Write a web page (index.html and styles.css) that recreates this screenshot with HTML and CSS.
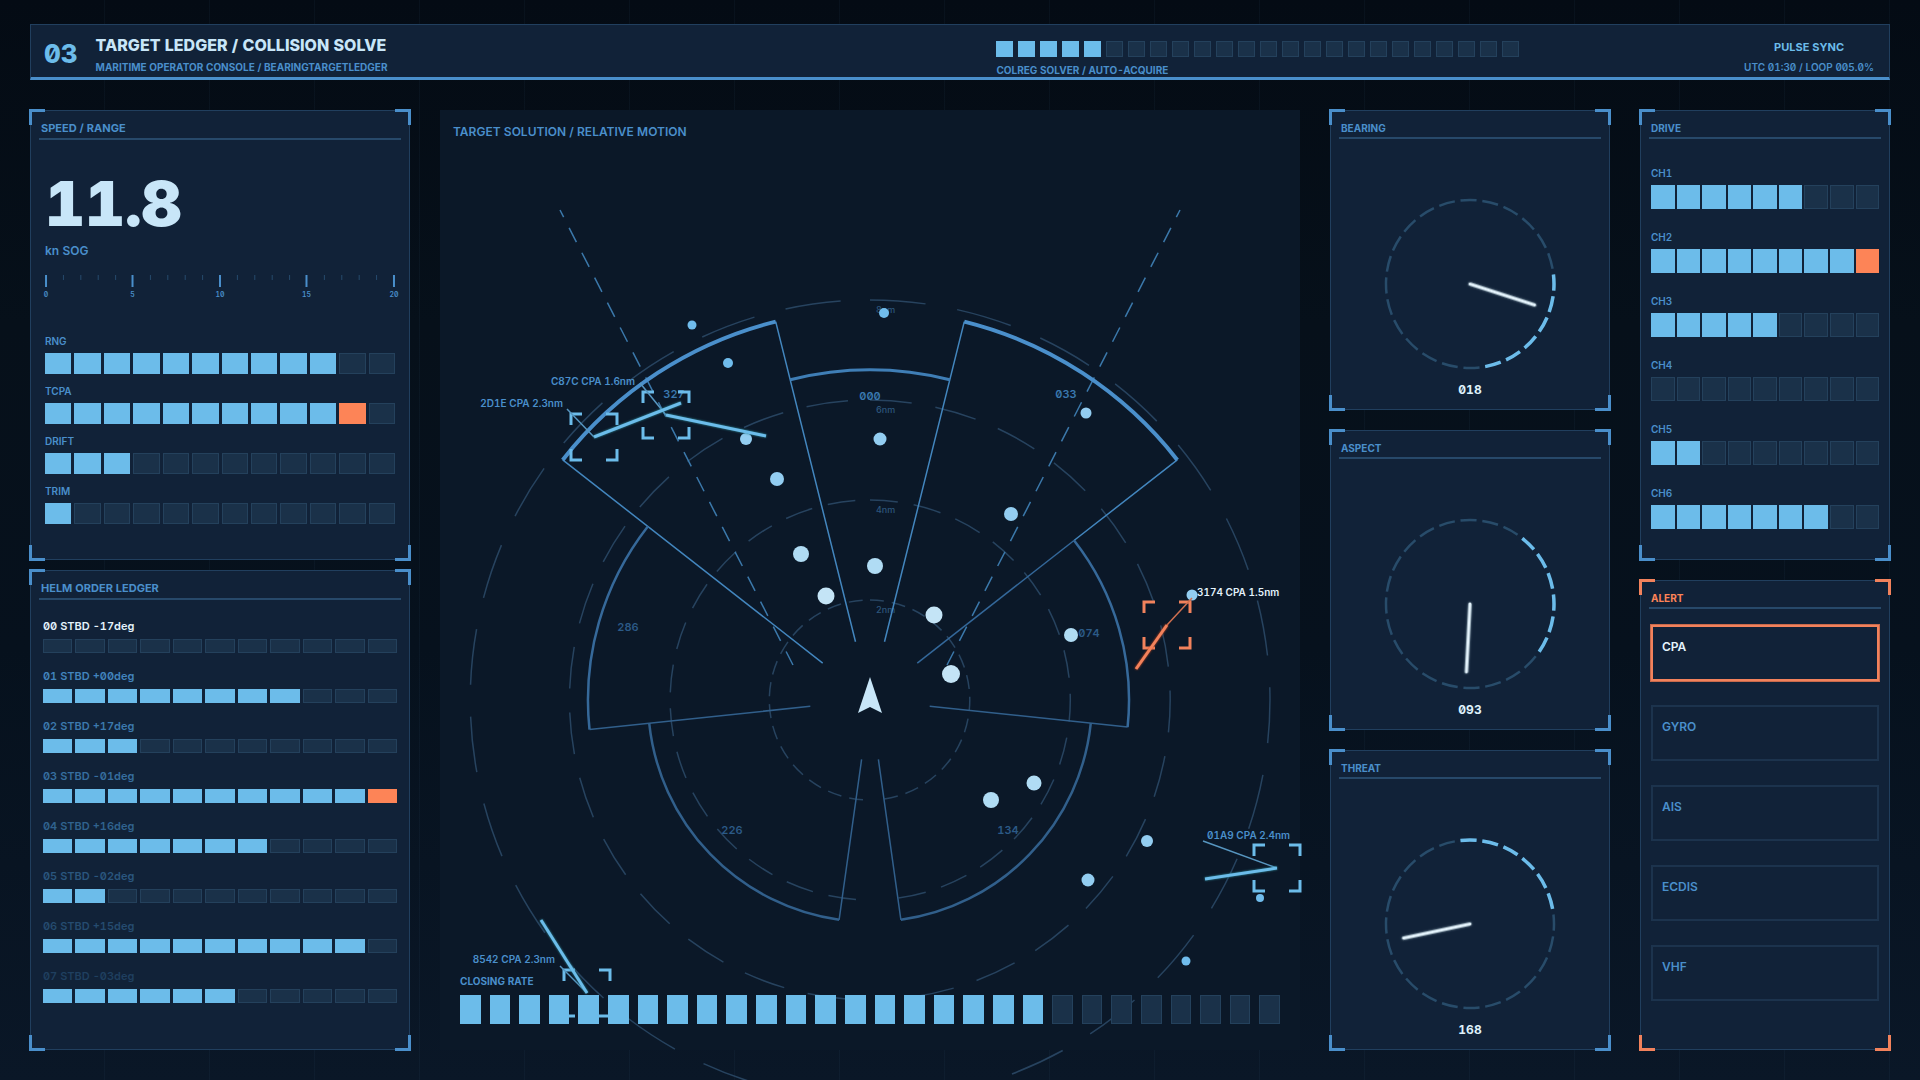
FILE: index.html
```html
<!DOCTYPE html>
<html lang="en">
<head>
<meta charset="utf-8">
<meta name="viewport" content="width=device-width, initial-scale=1">
<title>Target Ledger / Collision Solve</title>
<link rel="stylesheet" href="styles.css">
</head>
<body>
<div class="console">
  <header class="topbar">
    <div class="ident">
      <span class="ident-no">03</span>
      <div>
        <h1 class="ident-title">TARGET LEDGER / COLLISION SOLVE</h1>
        <p class="ident-sub">MARITIME OPERATOR CONSOLE / BEARINGTARGETLEDGER</p>
      </div>
    </div>
    <div class="solver">
      <div class="bar bar-solver" data-cells="24" data-lit="5"></div>
      <p class="small">COLREG SOLVER / AUTO-ACQUIRE</p>
    </div>
    <div class="sync">
      <p class="sync-title">PULSE SYNC</p>
      <p class="sync-clock">UTC 01:30 / LOOP 005.0%</p>
    </div>
  </header>

  <main class="deck">
    <div class="column column-left">
      <section class="panel">
        <h2 class="panel-title panel-title-lg">SPEED / RANGE</h2>
        <div class="speed">
          <p class="speed-value">11.8</p>
          <p class="speed-unit">kn SOG</p>
          <svg class="ruler" viewBox="0 0 352 24" aria-hidden="true">
            <path class="tick-minor" d="M18.5 0v5M36 0v5M53.5 0v5M71 0v5M106 0v5M123.5 0v5M141 0v5M158.5 0v5M193.5 0v5M211 0v5M228.500 0v5M246 0v5M281 0v5M298.500 0v5M316 0v5M333.500 0v5"/>
            <path class="tick-major" d="M1 0v12M88 0v12M176 0v12M263 0v12M351 0v12"/>
            <g class="tick-label"><text x="1" y="22">0</text><text x="88" y="22">5</text><text x="176" y="22">10</text><text x="263" y="22">15</text><text x="351" y="22">20</text></g>
          </svg>
          <div class="meters">
            <div class="meter"><span>RNG</span><div class="bar" data-cells="12" data-lit="10"></div></div>
            <div class="meter"><span>TCPA</span><div class="bar" data-cells="12" data-lit="10" data-hot="1"></div></div>
            <div class="meter"><span>DRIFT</span><div class="bar" data-cells="12" data-lit="3"></div></div>
            <div class="meter"><span>TRIM</span><div class="bar" data-cells="12" data-lit="1"></div></div>
          </div>
        </div>
      </section>
      <section class="panel">
        <h2 class="panel-title panel-title-lg">HELM ORDER LEDGER</h2>
        <ol class="ledger">
          <li class="age-0"><span>00 STBD -17deg</span><div class="bar" data-cells="11" data-lit="0"></div></li>
          <li class="age-1"><span>01 STBD +00deg</span><div class="bar" data-cells="11" data-lit="8"></div></li>
          <li class="age-2"><span>02 STBD +17deg</span><div class="bar" data-cells="11" data-lit="3"></div></li>
          <li class="age-3"><span>03 STBD -01deg</span><div class="bar" data-cells="11" data-lit="10" data-hot="1"></div></li>
          <li class="age-4"><span>04 STBD +16deg</span><div class="bar" data-cells="11" data-lit="7"></div></li>
          <li class="age-5"><span>05 STBD -02deg</span><div class="bar" data-cells="11" data-lit="2"></div></li>
          <li class="age-6"><span>06 STBD +15deg</span><div class="bar" data-cells="11" data-lit="10"></div></li>
          <li class="age-7"><span>07 STBD -03deg</span><div class="bar" data-cells="11" data-lit="6"></div></li>
        </ol>
      </section>
    </div>

    <section class="scope">
      <svg class="plot" viewBox="-430 -590 860 940" role="img" aria-label="Relative motion plot">
        <defs>
          <path id="lock" d="M-23 -12V-23H-12M12 -23H23V-12M23 12V23H12M-12 23H-23V12"/>
        </defs>
        <g class="rings">
          <path pathLength="172" d="M0 -100A100 100 0 0 1 13.900 99"/><path pathLength="172" d="M-7 99.800A100 100 0 0 1 -7 -99.800"/>
          <path pathLength="172" d="M0 -200A200 200 0 0 1 27.800 198.100"/><path pathLength="172" d="M-14 199.500A200 200 0 0 1 -14 -199.500"/>
          <path pathLength="172" d="M0 -300A300 300 0 0 1 41.800 297.100"/><path pathLength="172" d="M-21 299.300A300 300 0 0 1 -21 -299.300"/>
          <path pathLength="172" d="M0 -400A400 400 0 0 1 55.700 396.100"/><path pathLength="172" d="M-28 399A400 400 0 0 1 -28 -399"/>
        </g>
        <g class="ring-label"><text x="6" y="-387">8nm</text><text x="6" y="-287">6nm</text><text x="6" y="-187">4nm</text><text x="6" y="-87">2nm</text></g>
        <path class="limit" d="M-310 -490L-77 -35M310 -490L77 -35"/>
        <g class="sector">
          <path class="ray-3" d="M59.700 6.300L257.600 27.100M-59.700 6.300L-280.500 29.500M8.400 59.400L30.900 219.800M-8.400 59.400L-30.900 219.800"/>
          <path class="ray-1" d="M14.500 -58.200L94.300 -378.400M-14.500 -58.200L-94.300 -378.400M-47.300 -36.900L-307.300 -240.100M204 -159.500L307.300 -240.100"/>
          <path class="ray-2" d="M47.300 -36.900L204 -159.500"/>
          <path class="arc-1" d="M94.300 -378.400A390 390 0 0 1 307.300 -240.100M-307.300 -240.100A390 390 0 0 1 -94.300 -378.400"/>
          <path class="arc-2" d="M-79.800 -320.200A330 330 0 0 1 79.800 -320.200"/>
          <path class="arc-3" d="M-280.500 29.500A282 282 0 0 1 -222.200 -173.600M204.100 -159.500A259 259 0 0 1 257.600 27.100"/>
          <path class="arc-4" d="M220.800 23.200A222 222 0 0 1 30.900 219.800M-30.900 219.800A222 222 0 0 1 -220.800 23.200"/>
        </g>
        <g class="sector-label">
          <text class="near" x="0" y="-300">000</text><text class="near" x="196" y="-302">033</text><text class="near" x="-196" y="-302">327</text>
          <text x="219" y="-63">074</text><text x="-242" y="-69">286</text><text x="138" y="134">134</text><text x="-138" y="134">226</text>
        </g>
        <g class="echo-near">
          <circle cx="-44" cy="-104" r="8.500"/><circle cx="64" cy="-85" r="8.500"/><circle cx="81" cy="-26" r="9"/>
        </g>
        <g class="echo-mid">
          <circle cx="-69" cy="-146" r="8"/><circle cx="5" cy="-134" r="8"/><circle cx="121" cy="100" r="8"/><circle cx="164" cy="83" r="7.500"/><circle cx="201" cy="-65" r="7"/>
        </g>
        <g class="echo-far">
          <circle cx="-93" cy="-221" r="7"/><circle cx="141" cy="-186" r="7"/><circle cx="10" cy="-261" r="6.500"/><circle cx="-124" cy="-261" r="6"/><circle cx="218" cy="180" r="6.500"/><circle cx="277" cy="141" r="6"/><circle cx="216" cy="-287" r="5.500"/><circle cx="322" cy="-105" r="5.500"/>
        </g>
        <g class="echo-edge">
          <circle cx="-142" cy="-337" r="5"/><circle cx="14" cy="-387" r="5"/><circle cx="-178" cy="-375" r="4.500"/><circle cx="390" cy="198" r="4"/><circle cx="316" cy="261" r="4.500"/>
        </g>
        <g class="target">
          <use href="#lock" x="-204" y="-285"/><path class="leader" d="M-204 -285L-230 -317"/><path class="track" d="M-204 -285L-104 -264"/><text class="end" x="-235" y="-315">C87C CPA 1.6nm</text>
        </g>
        <g class="target">
          <use href="#lock" x="-276" y="-263"/><path class="leader" d="M-276 -263L-303 -291"/><path class="track" d="M-276 -263L-189 -297"/><text class="end" x="-307" y="-293">2D1E CPA 2.3nm</text>
        </g>
        <g class="target">
          <use href="#lock" x="407" y="168"/><path class="leader" d="M407 168L333 141"/><path class="track" d="M407 168L335 179"/><text x="337" y="139">01A9 CPA 2.4nm</text>
        </g>
        <g class="target">
          <use href="#lock" x="-283" y="293"/><path class="leader" d="M-283 293L-310 266"/><path class="track" d="M-283 293L-329 220"/><text class="end" x="-315" y="263">8542 CPA 2.3nm</text>
        </g>
        <g class="target target-hot">
          <use href="#lock" x="297" y="-75"/><path class="leader" d="M297 -75L322 -102"/><path class="track" d="M297 -75L266 -31"/><text x="327" y="-104">3174 CPA 1.5nm</text>
        </g>
        <path class="own-ship" d="M0 -23L12 13L0 7L-12 13Z"/>
      </svg>
      <div class="scope-overlay">
        <h2 class="scope-title">TARGET SOLUTION / RELATIVE MOTION</h2>
        <div class="closing">
          <span class="small">CLOSING RATE</span>
          <div class="bar" data-cells="28" data-lit="20"></div>
        </div>
      </div>
    </section>

    <div class="column column-dials">
      <section class="panel">
        <h2 class="panel-title">BEARING</h2>
        <svg class="dial" viewBox="-100 -100 200 200" aria-hidden="true">
          <circle class="dial-base" r="84" pathLength="360" transform="rotate(-96.500)"/>
          <circle class="dial-arc" r="84" pathLength="360" transform="rotate(-6.500)"/>
          <path class="needle" d="M0 0H68" transform="rotate(18)"/>
        </svg>
        <p class="dial-value">018</p>
      </section>
      <section class="panel">
        <h2 class="panel-title">ASPECT</h2>
        <svg class="dial" viewBox="-100 -100 200 200" aria-hidden="true">
          <circle class="dial-base" r="84" pathLength="360" transform="rotate(-96.500)"/>
          <circle class="dial-arc" r="84" pathLength="360" transform="rotate(-51.500)"/>
          <path class="needle" d="M0 0H68" transform="rotate(93)"/>
        </svg>
        <p class="dial-value">093</p>
      </section>
      <section class="panel">
        <h2 class="panel-title">THREAT</h2>
        <svg class="dial" viewBox="-100 -100 200 200" aria-hidden="true">
          <circle class="dial-base" r="84" pathLength="360" transform="rotate(-96.500)"/>
          <circle class="dial-arc" r="84" pathLength="360" transform="rotate(-96.500)"/>
          <path class="needle" d="M0 0H68" transform="rotate(168)"/>
        </svg>
        <p class="dial-value">168</p>
      </section>
    </div>

    <div class="column column-right">
      <section class="panel">
        <h2 class="panel-title">DRIVE</h2>
        <div class="channels">
          <div class="meter"><span>CH1</span><div class="bar" data-cells="9" data-lit="6"></div></div>
          <div class="meter"><span>CH2</span><div class="bar" data-cells="9" data-lit="8" data-hot="1"></div></div>
          <div class="meter"><span>CH3</span><div class="bar" data-cells="9" data-lit="5"></div></div>
          <div class="meter"><span>CH4</span><div class="bar" data-cells="9" data-lit="0"></div></div>
          <div class="meter"><span>CH5</span><div class="bar" data-cells="9" data-lit="2"></div></div>
          <div class="meter"><span>CH6</span><div class="bar" data-cells="9" data-lit="7"></div></div>
        </div>
      </section>
      <section class="panel panel-alert">
        <h2 class="panel-title">ALERT</h2>
        <ul class="alerts">
          <li class="active">CPA</li>
          <li>GYRO</li>
          <li>AIS</li>
          <li>ECDIS</li>
          <li>VHF</li>
        </ul>
      </section>
    </div>
  </main>
</div>
<script src="bars.js"></script>
</body>
</html>
```
FILE: styles.css
```css
:root {
  --cyan: #6cbcea;
  --blue: #4a8fcb;
  --ice: #c8e6f8;
  --hot: #fd8457;
  --panel: #112238;
  --line: #213f5e;
  --cell: #1a3149;
  --cell-line: #24415c;
}

* { box-sizing: border-box; }

body, h1, h2, p, ol, ul { margin: 0; padding: 0; }
ol, ul { list-style: none; }

body {
  font-family: Inter, "Noto Sans", sans-serif;
  font-weight: 600;
  font-feature-settings: "zero", "tnum";
  color: var(--blue);
  background: #07111c;
}

.console {
  display: flex;
  flex-direction: column;
  gap: 30px;
  min-height: 100vh;
  padding: 24px 30px 30px;
  overflow: hidden;
  background:
    repeating-linear-gradient(90deg, transparent 0 104px, rgba(80, 130, 170, 0.06) 104px 105px),
    linear-gradient(#040b14, #06101a 30%, #06111d 60%, #0a1727);
}

.small { font-size: 10px; line-height: 14px; font-weight: 700; }

/* Top bar */
.topbar {
  display: grid;
  grid-template-columns: 967fr 523fr 371fr;
  height: 56px;
  background: var(--panel);
  border: 1px solid var(--line);
  border-bottom: 3px solid var(--blue);
}
.ident { display: flex; align-items: center; gap: 18px; padding-left: 13px; padding-top: 6px; }
.ident-no { font-size: 26px; line-height: 32px; font-weight: 800; color: var(--cyan); }
.ident-title { font-size: 16px; line-height: 20px; font-weight: 800; color: var(--ice); }
.ident-sub { margin-top: 5px; font-size: 10px; line-height: 14px; font-weight: 700; }
.solver { display: grid; align-content: start; gap: 6px; padding-top: 16px; }
.sync { justify-self: end; padding: 14px 15px 0 0; text-align: center; }
.sync-title { margin-bottom: 5px; font-size: 11px; line-height: 16px; font-weight: 700; color: var(--cyan); }
.sync-clock { font-size: 10px; line-height: 14px; }

/* Segmented bars */
.bar { display: flex; gap: 3px; height: 21px; }
.cell { flex: 1 1 0; background: var(--cell); border: 1px solid var(--cell-line); }
.cell.lit { background: var(--cyan); border-color: var(--cyan); }
.cell.hot { background: var(--hot); border-color: var(--hot); }
.bar-solver { gap: 5px; height: 16px; }

/* Deck and panels */
.deck {
  flex: 1;
  display: grid;
  grid-template-columns: 380fr 860fr 280fr 250fr;
  gap: 30px;
}
.column { display: grid; gap: 20px; }
.column-left { grid-template-rows: 450fr 480fr; gap: 10px; }
.column-dials { grid-template-rows: repeat(3, 1fr); }
.column-right { grid-template-rows: 450fr 470fr; }

.panel {
  --corner: var(--blue);
  position: relative;
  display: flex;
  flex-direction: column;
  padding: 9px 8px;
  background: var(--panel);
  border: 1px solid var(--line);
}
.panel::after {
  content: "";
  position: absolute;
  inset: -2px;
  pointer-events: none;
  background:
    linear-gradient(var(--corner) 0 0) 0 0 / 16px 3px,
    linear-gradient(var(--corner) 0 0) 0 0 / 3px 16px,
    linear-gradient(var(--corner) 0 0) 100% 0 / 16px 3px,
    linear-gradient(var(--corner) 0 0) 100% 0 / 3px 16px,
    linear-gradient(var(--corner) 0 0) 0 100% / 16px 3px,
    linear-gradient(var(--corner) 0 0) 0 100% / 3px 16px,
    linear-gradient(var(--corner) 0 0) 100% 100% / 16px 3px,
    linear-gradient(var(--corner) 0 0) 100% 100% / 3px 16px;
  background-repeat: no-repeat;
}
.panel-alert { --corner: #f2825c; }
.panel-title {
  padding: 0 2px 1px;
  border-bottom: 2px solid #27496a;
  font-size: 10px;
  line-height: 16px;
  font-weight: 700;
}
.panel-title-lg { padding-bottom: 2px; font-size: 11px; }
.panel-alert .panel-title { color: var(--hot); }

/* Speed */
.speed { padding: 32px 6px 0; }
.speed-value { font-size: 62px; line-height: 64px; font-weight: 900; color: var(--ice); }
.speed-unit { margin-top: 7px; font-size: 12px; line-height: 16px; }
.ruler { display: block; width: 100%; margin-top: 16px; overflow: visible; }
.tick-major { stroke: var(--blue); stroke-width: 2; }
.tick-minor { stroke: #264b6d; stroke-width: 1; }
.tick-label { fill: var(--blue); font-size: 7px; text-anchor: middle; }
.meters { display: grid; gap: 10px; margin-top: 35px; }
.meter { display: grid; gap: 5px; font-size: 10px; line-height: 14px; }

/* Ledger */
.ledger { display: grid; gap: 15px; padding: 18px 4px 0; font-size: 11px; line-height: 16px; }
.ledger li { display: grid; gap: 5px; }
.ledger .bar { height: 14px; }
.age-0 { color: #e4f3fc; }
.age-1 { color: #4284bd; }
.age-2 { color: #3c79ad; }
.age-3 { color: #366e9f; }
.age-4 { color: #30628e; }
.age-5 { color: #2a567e; }
.age-6 { color: #254b6f; }
.age-7 { color: #1f3f5f; }

/* Scope */
.scope { display: grid; background: #0b1828; }
.plot, .scope-overlay { grid-area: 1 / 1; }
.plot { display: block; width: 100%; height: 100%; overflow: visible; fill: none; }
.scope-overlay {
  display: flex;
  flex-direction: column;
  justify-content: space-between;
  padding: 14px 20px 26px 13px;
}
.scope-title { font-size: 12px; line-height: 16px; font-weight: 600; }
.closing { display: grid; gap: 7px; padding-left: 7px; }
.closing .bar { gap: 9px; height: 29px; }

.plot text { font-size: 10px; stroke: none; }
.rings { stroke: #27435f; stroke-width: 1.5; stroke-dasharray: 8 4.6; }
.plot .ring-label text { font-size: 9px; font-weight: 500; fill: #2d567c; }
.limit { stroke: #3b78aa; stroke-width: 1.5; stroke-dasharray: 16 12; stroke-dashoffset: 8; }
.ray-1 { stroke: #4386be; stroke-width: 1.5; }
.ray-2 { stroke: #34689a; stroke-width: 1.5; }
.ray-3 { stroke: #315f8b; stroke-width: 1.5; }
.arc-1 { stroke: var(--blue); stroke-width: 4; }
.arc-2 { stroke: #3f7eb6; stroke-width: 3; }
.arc-3 { stroke: #36699a; stroke-width: 2.5; }
.arc-4 { stroke: #315f8b; stroke-width: 2.5; }
.plot .sector-label text { font-size: 11px; text-anchor: middle; fill: #2b5a87; }
.plot .sector-label .near { fill: #3a78af; }
.echo-near { fill: #c4e4f6; }
.echo-mid { fill: #b0dcf4; }
.echo-far { fill: #93cdf1; }
.echo-edge { fill: #70bcec; }
.own-ship { fill: var(--ice); }
.target { stroke: var(--cyan); }
.target use { stroke-width: 3; }
.target .leader { stroke: #5796c0; stroke-width: 1.5; }
.target .track { stroke-width: 3; filter: drop-shadow(0 0 1px #2d8c9c); }
.target text { fill: var(--blue); }
.target .end { text-anchor: end; }
.target-hot { stroke: #f2825c; }
.target-hot .leader { stroke: #d06f50; }
.target-hot .track { filter: drop-shadow(0 0 1px #d0481c); }
.target-hot text { fill: #e4f3fc; }

/* Dials */
.dial { display: block; width: 200px; margin: 45px auto 0; fill: none; }
.dial-base { stroke: #284c6a; stroke-width: 2.5; stroke-dasharray: 11 4; }
.dial-arc { stroke: var(--cyan); stroke-width: 3.5; stroke-dasharray: 11 4 11 4 11 4 11 4 11 4 11 274; }
.needle { stroke: #e4f3fc; stroke-width: 3; stroke-linecap: round; filter: drop-shadow(0 0 1px #8fa9b5); }
.dial-value { margin-top: -2px; font-size: 12px; line-height: 16px; font-weight: 700; text-align: center; color: #dff1fb; }

/* Drive */
.channels { display: grid; gap: 21px; padding: 27px 2px 0; }
.channels .bar { gap: 2px; height: 24px; }

/* Alerts */
.alerts { display: grid; gap: 24px; padding: 16px 2px 0; }
.alerts li {
  height: 56px;
  padding: 12px 9px;
  border: 2px solid #1c334d;
  font-size: 12px;
  line-height: 16px;
}
.alerts .active { border-color: #f2825c; box-shadow: 0 0 0 1px #c86a4c; color: #e4f3fc; }
```
FILE: bars.js
```js
// Fill every segmented bar from its data attributes: lit cells first, then hot cells, then empty ones.
document.querySelectorAll('.bar').forEach(function (bar) {
  var cells = Number(bar.dataset.cells);
  var lit = Number(bar.dataset.lit);
  var hot = Number(bar.dataset.hot || 0);
  for (var i = 0; i < cells; i++) {
    var cell = document.createElement('span');
    cell.className = 'cell' + (i < lit ? ' lit' : i < lit + hot ? ' hot' : '');
    bar.appendChild(cell);
  }
});
```
